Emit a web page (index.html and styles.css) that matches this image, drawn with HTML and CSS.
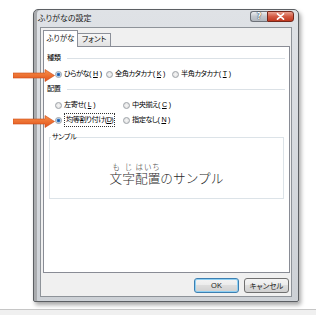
FILE: index.html
```html
<!DOCTYPE html>
<html lang="ja">
<head>
    <meta charset="UTF-8">
    <title>ふりがなの設定</title>
    <link rel="stylesheet" href="styles.css">
</head>
<body>
    <div class="desk">
        <div class="dialog">
            <div class="titlebar">
                <span class="title">ふりがなの設定</span>
                <div class="caption-btns">
                    <span class="cap-btn cap-help">?</span>
                    <span class="cap-btn cap-close">
                        <svg width="9" height="7" viewBox="0 0 9 7">
                            <path d="M1.5 0.8 L7.5 6.2 M7.5 0.8 L1.5 6.2" stroke="#ffffff" stroke-width="1.6" stroke-linecap="round"/>
                        </svg>
                    </span>
                </div>
            </div>

            <div class="client">
                <div class="tabs">
                    <span class="tab active">ふりがな</span>
                    <span class="tab">フォント</span>
                </div>

                <div class="panel">
                    <div class="section-head"><span>種類</span><i class="rule"></i></div>
                    <div class="radio-row row-type">
                        <label class="opt"><span class="radio checked"></span>ひらがな(<u>H</u>)</label>
                        <label class="opt"><span class="radio"></span>全角カタカナ(<u>K</u>)</label>
                        <label class="opt"><span class="radio"></span>半角カタカナ(<u>T</u>)</label>
                    </div>

                    <div class="section-head gap-top"><span>配置</span><i class="rule"></i></div>
                    <div class="radio-row row-align">
                        <label class="opt"><span class="radio"></span>左寄せ(<u>L</u>)</label>
                        <label class="opt"><span class="radio"></span>中央揃え(<u>C</u>)</label>
                    </div>
                    <div class="radio-row row-align tight">
                        <label class="opt"><span class="radio checked"></span><span class="focus">均等割り付け(<u>D</u>)</span></label>
                        <label class="opt"><span class="radio"></span>指定なし(<u>N</u>)</label>
                    </div>

                    <fieldset class="sample">
                        <legend>サンプル</legend>
                        <div class="sample-text"><ruby>文字<rt>もじ</rt></ruby><ruby>配置<rt>はいち</rt></ruby>のサンプル</div>
                    </fieldset>
                </div>

                <div class="buttons">
                    <button class="btn default">OK</button>
                    <button class="btn">キャンセル</button>
                </div>
            </div>
        </div>

        <svg class="arrow arrow-type" width="42" height="13" viewBox="0 0 42 13">
            <defs>
                <linearGradient id="arrowFill" x1="0" y1="0" x2="0" y2="1">
                    <stop offset="0" stop-color="#f7924a"/>
                    <stop offset="1" stop-color="#e2511b"/>
                </linearGradient>
            </defs>
            <polygon points="0,4 32,4 32,0.5 41.5,6.5 32,12.5 32,9 0,9" fill="url(#arrowFill)" stroke="#cc4a16" stroke-width="0.6"/>
        </svg>
        <svg class="arrow arrow-align" width="42" height="13" viewBox="0 0 42 13">
            <polygon points="0,4 32,4 32,0.5 41.5,6.5 32,12.5 32,9 0,9" fill="url(#arrowFill)" stroke="#cc4a16" stroke-width="0.6"/>
        </svg>
    </div>
    <div class="sheet-edge"></div>
</body>
</html>
```

FILE: styles.css
```css
body {
    margin: 0;
    background-color: #ffffff;
    font-family: "Liberation Sans", "Noto Sans CJK JP", sans-serif;
    color: #111111;
}
.desk {
    position: relative;
    width: 316px;
    height: 309px;
    padding: 9px 0 0 33px;
    box-sizing: border-box;
}
.dialog {
    width: 266px;
    height: 293px;
    box-sizing: border-box;
    border: 1px solid #5c5f63;
    border-radius: 5px 5px 2px 2px;
    padding: 0 6px 4px 6px;
    background: linear-gradient(#dfe2e6, #cdd1d6);
    box-shadow: inset 3px 0 0 #a9abae, 2px 3px 4px rgba(0, 0, 0, 0.35);
}
.titlebar {
    height: 17px;
    display: flex;
    justify-content: space-between;
    align-items: flex-start;
    margin: 0 -2px;
}
.title {
    font-size: 8px;
    line-height: 17px;
    font-feature-settings: "palt";
    color: #222;
}
.caption-btns {
    display: flex;
    margin-top: 1px;
}
.cap-btn {
    height: 11px;
    box-sizing: border-box;
    display: flex;
    align-items: center;
    justify-content: center;
    border: 1px solid #6d7178;
}
.cap-help {
    width: 17px;
    border-right: none;
    border-radius: 3px 0 0 3px;
    background: linear-gradient(#eceef1, #c3c8ce 50%, #b3b8bf);
    font: bold 8px "DejaVu Sans", sans-serif;
    color: #ffffff;
    text-shadow: 0 0 1px #2d3035, 0 0 1px #2d3035;
}
.cap-close {
    width: 27px;
    border-color: #74281c;
    border-radius: 0 3px 3px 0;
    background: linear-gradient(#eba08f, #d35a43 50%, #c0381f);
}

.client {
    height: 270px;
    box-sizing: border-box;
    border: 1px solid #8e9399;
    background-color: #f0f0f0;
    padding: 2px 1px 3px 2px;
}
.tabs {
    display: flex;
    align-items: flex-end;
    height: 17px;
    margin-bottom: -1px;
    position: relative;
    z-index: 1;
}
.tab {
    box-sizing: border-box;
    height: 13px;
    width: 34px;
    margin-left: -1px;
    margin-bottom: 1px;
    border: 1px solid #8c9099;
    border-bottom: none;
    background: linear-gradient(#f6f6f6, #e2e2e2);
    font-size: 7.5px;
    line-height: 12px;
    text-align: center;
    font-feature-settings: "palt";
}
.tab.active {
    height: 17px;
    width: 35px;
    margin: 0;
    background: #ffffff;
    line-height: 15px;
    position: relative;
    z-index: 2;
}

.panel {
    height: 227px;
    box-sizing: border-box;
    border: 1px solid #898c95;
    background-color: #ffffff;
    padding: 6px 4px 0 3px;
    font-size: 7.2px;
    letter-spacing: -0.5px;
    font-feature-settings: "palt";
    color: #000000;
}
.section-head {
    display: flex;
    align-items: center;
    gap: 7px;
    height: 10px;
    line-height: 10px;
}
.section-head.gap-top {
    margin-top: 3px;
}
.rule {
    flex: 1;
    height: 1px;
    background-color: #dbe1e6;
}
.radio-row {
    display: grid;
    align-items: center;
    height: 14px;
    margin-top: 4px;
    padding-left: 8px;
}
.radio-row.tight {
    margin-top: 1px;
}
.row-type {
    grid-template-columns: 51px 66px auto;
}
.row-align {
    grid-template-columns: 68px auto;
}
.opt {
    display: flex;
    align-items: center;
    gap: 2px;
    white-space: nowrap;
    line-height: 12px;
}
.radio {
    width: 7px;
    height: 7px;
    box-sizing: border-box;
    border-radius: 50%;
    border: 1px solid #9da2a8;
    background: radial-gradient(circle, #f6f6f6 0, #dcdcdc 100%);
}
.radio.checked {
    background: radial-gradient(circle, #1c4f8c 0, #3a7bc8 1.4px, #cfdff0 2.2px, #eef3f8 100%);
}
.focus {
    border: 1px dotted #333;
    padding: 0 1px;
}

.sample {
    box-sizing: border-box;
    height: 67px;
    margin: 5px 1px 0 2px;
    padding: 0;
    border: 1px solid #dce3e8;
}
.sample legend {
    margin-left: 1px;
    padding: 0 1px;
    line-height: 10px;
}
.sample-text {
    padding-top: 29px;
    text-align: center;
    font-family: "Noto Sans CJK JP", sans-serif;
    font-size: 12.7px;
    line-height: 14px;
    font-weight: 300;
    letter-spacing: normal;
    font-feature-settings: normal;
    color: #2a2a2a;
}
.sample-text rt {
    font-size: 7.5px;
    line-height: 8px;
}

.buttons {
    display: flex;
    justify-content: flex-end;
    gap: 5px;
    margin: 5px 1px 0 0;
}
.btn {
    width: 45px;
    height: 15px;
    padding: 0;
    border: 1px solid #707070;
    border-radius: 3px;
    background: linear-gradient(#f4f4f4 0, #ebebeb 50%, #dddddd 50%, #d0d0d0 100%);
    font-family: "Liberation Sans", "Noto Sans CJK JP", sans-serif;
    font-size: 7.5px;
    font-feature-settings: "palt";
    color: #1c1c1c;
}
.btn.default {
    border-color: #3c7fb1;
    box-shadow: inset 0 0 0 1px #8fd0f3;
}

.arrow {
    position: absolute;
    left: 13px;
}
.arrow-type {
    top: 69px;
}
.arrow-align {
    top: 115px;
}
.sheet-edge {
    height: 6px;
    border-top: 1px solid #c6c6c6;
    background-color: #f0f0f0;
}
```
